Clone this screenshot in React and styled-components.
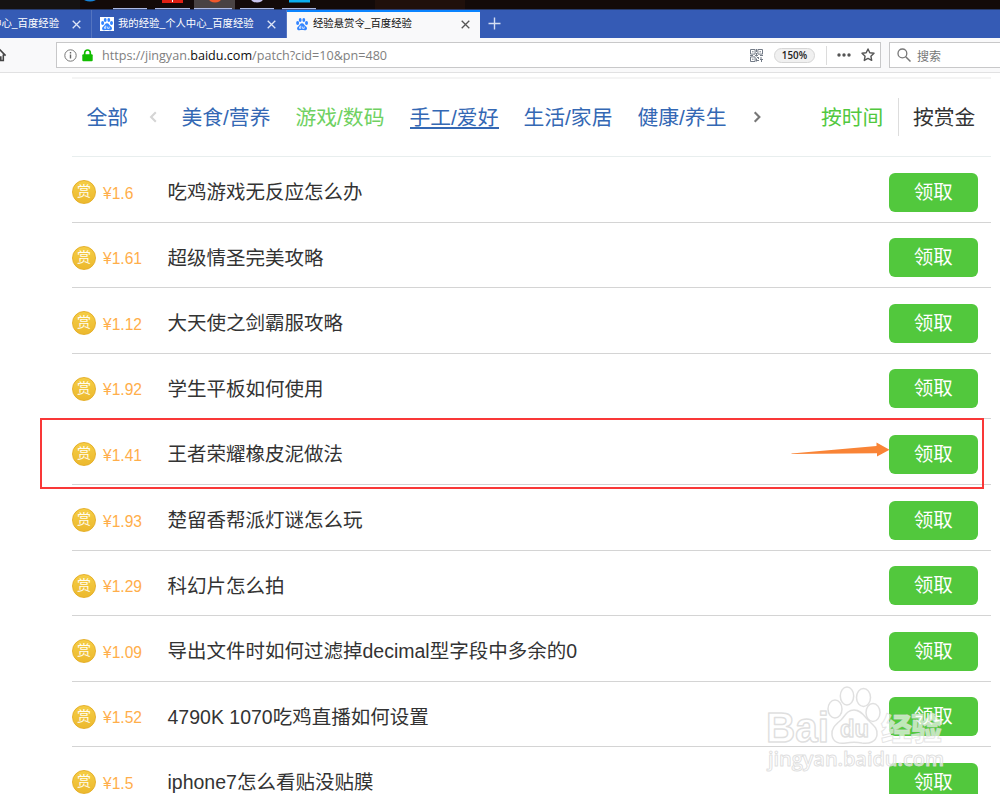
import React from "react";
import styled, { createGlobalStyle } from "styled-components";

const GlobalStyle = createGlobalStyle`
  * {
    box-sizing: border-box;
  }

  body {
    margin: 0;
    overflow: hidden;
    background: #fff;
    font-family: "Liberation Sans", "Noto Sans CJK SC", sans-serif;
  }
`;

const Window = styled.div`
  position: relative;
  width: 1000px;
  height: 794px;
  overflow: hidden;
  display: flex;
  flex-direction: column;
  background: #fff;
`;

const Desktop = styled.svg`
  display: block;
  flex: none;
  width: 1000px;
  height: 10px;
`;

const TabBar = styled.div`
  flex: none;
  display: flex;
  height: 28px;
  background: #355bb5;
`;

const Tab = styled.div`
  flex: none;
  display: flex;
  align-items: center;
  width: ${props => props.$width}px;
  padding: 0 10px 0 8px;
  overflow: hidden;
  color: ${props => (props.$active ? "#111" : "#fff")};
  background: ${props => (props.$active ? "#f9f9fa" : "transparent")};
  border-right: ${props => (props.$active ? "none" : "1px solid #5474c0")};
  box-shadow: ${props => (props.$active ? "inset 0 2px #0a84ff" : "none")};
`;

const TabTitle = styled.span`
  flex: 1;
  min-width: 0;
  display: flex;
  justify-content: ${props => (props.$end ? "flex-end" : "flex-start")};
  margin: 0 0 0 ${props => (props.$end ? 0 : 4)}px;
  font-size: 10.35px;
  line-height: 16px;
  white-space: nowrap;
`;

const CloseSlot = styled.span`
  display: flex;
  flex: none;
  margin-left: ${props => props.$gap || 0}px;
`;

const NewTab = styled.div`
  display: flex;
  align-items: center;
  padding: 0 0 2px 8px;
`;

const Toolbar = styled.div`
  flex: none;
  display: flex;
  align-items: center;
  height: 35px;
  background: #f9f9fa;
  border-bottom: 1px solid #e1e1e2;
`;

const HomeSlot = styled.div`
  flex: none;
  width: 56px;
  height: 16px;
  overflow: hidden;
`;

const AddressBar = styled.div`
  flex: none;
  display: flex;
  align-items: center;
  width: 825px;
  height: 26px;
  padding: 0 5px 0 7px;
  background: #fff;
  border: 1px solid #c8c8c9;
`;

const Url = styled.div`
  flex: 1;
  margin-left: 9px;
  padding-top: 2px;
  font-family: "Open Sans", "Noto Sans", sans-serif;
  font-size: 12.6px;
  line-height: 18px;
  color: #808080;
  white-space: nowrap;

  b {
    font-weight: normal;
    color: #0c0c0d;
  }
`;

const Zoom = styled.div`
  width: 41px;
  height: 15px;
  margin: 0 11px;
  border: 1px solid #d6d6d6;
  border-radius: 8px;
  background: #f0f0f0;
  font-family: "Open Sans", sans-serif;
  font-size: 9.8px;
  font-weight: 600;
  line-height: 14px;
  text-align: center;
  color: #222;
`;

const Separator = styled.div`
  width: 1px;
  height: 19px;
  margin-right: 9px;
  background: #dcdcdc;
`;

const SearchBar = styled.div`
  flex: none;
  display: flex;
  align-items: center;
  width: 130px;
  height: 26px;
  margin-left: 8px;
  padding-left: 7px;
  background: #fff;
  border: 1px solid #c8c8c9;
  font-size: 12px;
  color: #777;

  svg {
    margin-right: 6px;
  }
`;

const Page = styled.main`
  flex: none;
  width: 919px;
  margin: 4px 0 0 72px;
  border-top: 2px solid #f4f4f4;
`;

const Filters = styled.nav`
  display: flex;
  align-items: center;
  height: 78px;
  padding: 0 0 1px 14.5px;
  border-bottom: 1px solid #e8eeee;
  font-size: 20.8px;
  white-space: nowrap;
`;

const Filter = styled.a`
  flex: none;
  width: ${props => props.$width}px;
  height: 23px;
  color: ${props => (props.$current ? "#70d162" : "#3468b4")};
  line-height: 24px;
  border-bottom: 2px solid ${props => (props.$hovered ? "#3468b4" : "transparent")};
`;

const Categories = styled.div`
  display: flex;
  gap: 25px;
  margin: 0 26px 0 24.5px;
`;

const Sort = styled.div`
  display: flex;
  align-items: center;
  margin-left: 60px;
`;

const SortItem = styled.a`
  width: 78px;
  height: 38px;
  line-height: 40px;
  color: ${props => (props.$current ? "#51c83e" : "#333")};
  border-right: ${props => (props.$current ? "1px solid #ddd" : "none")};

  & + & {
    margin-left: 14px;
  }
`;

const Row = styled.div`
  display: flex;
  align-items: center;
  height: 65.6px;
  padding: 5.6px 13px 0 0;
  border-bottom: 1px solid #d4d4d4;
`;

const Coin = styled.div`
  flex: none;
  width: 24px;
  height: 24px;
  border: 1.5px solid #e6b02a;
  border-radius: 50%;
  background: linear-gradient(#f5cd45, #ecb92e);
  font-size: 14px;
  line-height: 21px;
  text-align: center;
  color: #fffdf2;
`;

const Price = styled.div`
  flex: none;
  width: 64.5px;
  margin-left: 7px;
  padding-top: 3px;
  font-size: 15.6px;
  color: #ffae4a;
`;

const Title = styled.div`
  flex: 1;
  font-size: 19.5px;
  line-height: 30px;
  color: #333;
  white-space: nowrap;
`;

const ClaimButton = styled.button`
  flex: none;
  width: 89.5px;
  height: 39px;
  padding: 0;
  border: none;
  border-radius: 6px;
  background: #52c83d;
  font: inherit;
  font-size: 19.5px;
  line-height: 37px;
  color: #fff;
`;

const Highlight = styled.div`
  position: absolute;
  left: 40px;
  top: 418px;
  width: 944px;
  height: 71px;
  border: 2px solid #f93838;
`;

const Pointer = styled.svg`
  position: absolute;
  left: 790px;
  top: 440px;
`;

const Watermark = styled.svg`
  position: absolute;
  left: 760px;
  top: 680px;
`;

const tasks = [
  { price: "1.6", title: "吃鸡游戏无反应怎么办" },
  { price: "1.61", title: "超级情圣完美攻略" },
  { price: "1.12", title: "大天使之剑霸服攻略" },
  { price: "1.92", title: "学生平板如何使用" },
  { price: "1.41", title: "王者荣耀橡皮泥做法" },
  { price: "1.93", title: "楚留香帮派灯谜怎么玩" },
  { price: "1.29", title: "科幻片怎么拍" },
  { price: "1.09", title: "导出文件时如何过滤掉decimal型字段中多余的0" },
  { price: "1.52", title: "4790K 1070吃鸡直播如何设置" },
  { price: "1.5", title: "iphone7怎么看贴没贴膜" },
];

const categories = ["美食/营养", "游戏/数码", "手工/爱好", "生活/家居", "健康/养生"];

const Paw = ({ boxed }) => (
  <svg width="14" height="14" viewBox="0 0 14 14">
    {boxed && <rect width="14" height="14" fill="#fff" />}
    <g fill="#3385ff">
      <ellipse cx="2.6" cy="6" rx="1.5" ry="1.9" />
      <ellipse cx="5.2" cy="3" rx="1.4" ry="2" />
      <ellipse cx="8.8" cy="3" rx="1.4" ry="2" />
      <ellipse cx="11.5" cy="6" rx="1.5" ry="1.9" />
      <path d="M7 6.2C5 6.2 4.7 8.3 3.2 9.4 1.1 11 2.2 13.4 4.4 13.2c1.8-.2 3.4-.2 5.2 0 2.3.2 3.4-2.2 1.3-3.8C9.3 8.3 9 6.2 7 6.2Z" />
    </g>
    <path d="M5.8 8.6v2.8H4.5V9.9h1.3M7.6 9.6v1.8h1.6V9.6" fill="none" stroke="#fff" strokeWidth="0.7" />
  </svg>
);

const Close = ({ color }) => (
  <svg width="9" height="9" viewBox="0 0 9 9">
    <path d="M.7.7l7.6 7.6M8.3.7L.7 8.3" stroke={color} strokeWidth="1.3" />
  </svg>
);

const Chevron = ({ left, color }) => (
  <svg width="10" height="14" viewBox="0 0 10 14">
    <path
      d={left ? "M8 1.5L2.5 7 8 12.5" : "M2 1.5L7.5 7 2 12.5"}
      fill="none"
      stroke={color}
      strokeWidth="2.5"
    />
  </svg>
);

const DesktopStrip = () => (
  <Desktop viewBox="0 0 1000 10">
    <rect width="1000" height="10" fill="#130a09" />
    <rect width="80" height="10" fill="#151312" />
    <rect x="375" width="90" height="10" fill="#20100b" />
    <rect x="194" width="41" height="10" fill="#494343" />
    <ellipse cx="90" cy="-2" rx="7" ry="3.5" fill="#1683d8" />
    <rect x="162" width="21" height="3" fill="#df2015" />
    <path d="M172.5 0v2" stroke="#fff" />
    <ellipse cx="215" cy="-1" rx="6" ry="3.5" fill="#f0582b" />
    <ellipse cx="257" cy="-1" rx="6" ry="3.5" fill="#c9c5ef" />
    <rect x="289" width="21" height="2.5" fill="#09aef0" />
    <g fill="#acb9e4">
      <rect x="113" y="8" width="34" height="1.5" />
      <rect x="155" y="8" width="35" height="1.5" />
      <rect x="194" y="8" width="38" height="1.5" />
      <rect x="240" y="8" width="34" height="1.5" />
      <rect x="282" y="8" width="34" height="1.5" />
    </g>
    <rect y="9.3" width="1000" height=".7" fill="#304f99" />
  </Desktop>
);

const BrowserTabs = () => (
  <TabBar>
    <Tab $width={92}>
      <TabTitle $end>中心_百度经验</TabTitle>
      <CloseSlot $gap={13}>
        <Close color="#dfe6f7" />
      </CloseSlot>
    </Tab>
    <Tab $width={195}>
      <Paw boxed />
      <TabTitle>我的经验_个人中心_百度经验</TabTitle>
      <CloseSlot $gap={4}>
        <Close color="#dfe6f7" />
      </CloseSlot>
    </Tab>
    <Tab $width={193} $active>
      <Paw />
      <TabTitle>经验悬赏令_百度经验</TabTitle>
      <CloseSlot>
        <Close color="#555" />
      </CloseSlot>
    </Tab>
    <NewTab>
      <svg width="13" height="13" viewBox="0 0 13 13">
        <path d="M6.5.5v12M.5 6.5h12" stroke="#d5def3" strokeWidth="1.4" />
      </svg>
    </NewTab>
  </TabBar>
);

const BrowserToolbar = () => (
  <Toolbar>
    <HomeSlot>
      <svg width="16" height="16" viewBox="0 0 16 16">
        <path d="M-7 8.6L-.5 2.4 5.6 8.6M3.3 7.5v6H.8V10h-2.6" fill="none" stroke="#444" strokeWidth="1.6" />
      </svg>
    </HomeSlot>
    <AddressBar>
      <svg width="13" height="13" viewBox="0 0 13 13">
        <circle cx="6.5" cy="6.5" r="5.7" fill="none" stroke="#777" />
        <path d="M6.5 5.6v4M6.5 3v1.4" stroke="#666" strokeWidth="1.4" />
      </svg>
      <svg width="11" height="13" viewBox="0 0 11 13" style={{ marginLeft: 5 }}>
        <path d="M2.7 6V3.8a2.8 2.8 0 015.6 0V6" fill="none" stroke="#12bc00" strokeWidth="1.7" />
        <rect x=".3" y="5.3" width="10.4" height="7" rx="1" fill="#12bc00" />
      </svg>
      <Url>
        https://jingyan.<b>baidu.com</b>/patch?cid=10&amp;pn=480
      </Url>
      <svg width="13" height="13" viewBox="0 0 13 13" fill="none" stroke="#737b87">
        <path d="M.5.5h4.6v4.6H.5zM7.9.5h4.6v4.6H7.9zM.5 7.9h4.6v4.6H.5z" />
        <path d="M2 2.8h1.6M9.4 2.8H11M2 10.2h1.6M6.5 0v3M6.5 4v3.5M0 6.5h3M5 6.5h3M10 6.5h3M7 8.5h2M8.5 8v2M11 8v2M7 11.5h2M10 10.5h3M11.5 10v3M6.5 9.5v3" />
      </svg>
      <Zoom>150%</Zoom>
      <Separator />
      <svg width="16" height="4" viewBox="0 0 16 4" fill="#555">
        <circle cx="3" cy="2" r="1.7" />
        <circle cx="8" cy="2" r="1.7" />
        <circle cx="13" cy="2" r="1.7" />
      </svg>
      <svg width="14" height="14" viewBox="0 0 14 14" style={{ marginLeft: 9 }}>
        <path
          d="M7 1l1.8 3.8 4.2.5-3.1 2.9.8 4.2L7 10.4l-3.7 2 .8-4.2L1 5.3l4.2-.5z"
          fill="none"
          stroke="#555"
          strokeWidth="1.4"
          strokeLinejoin="round"
        />
      </svg>
    </AddressBar>
    <SearchBar>
      <svg width="14" height="14" viewBox="0 0 14 14">
        <circle cx="5.4" cy="5.4" r="4.4" fill="none" stroke="#777" strokeWidth="1.3" />
        <path d="M8.7 8.7l4.8 4.8" stroke="#777" strokeWidth="1.5" />
      </svg>
      搜索
    </SearchBar>
  </Toolbar>
);

const TaskRow = ({ task }) => (
  <Row>
    <Coin>赏</Coin>
    <Price>¥{task.price}</Price>
    <Title>{task.title}</Title>
    <ClaimButton>领取</ClaimButton>
  </Row>
);

const BaiduWatermark = () => (
  <Watermark width="190" height="100" viewBox="0 0 190 100">
    <g
      fill="#fff"
      fillOpacity="0.65"
      stroke="#dadada"
      strokeOpacity="0.85"
      strokeWidth="1.5"
      strokeLinejoin="round"
      fontFamily='"Liberation Sans", "Noto Sans CJK SC", sans-serif'
    >
      <text x="6" y="62" fontSize="42" fontWeight="700" textLength="63" lengthAdjust="spacingAndGlyphs">
        Bai
      </text>
      <ellipse cx="75" cy="29" rx="7" ry="9" />
      <ellipse cx="87" cy="16" rx="6.7" ry="9" />
      <ellipse cx="103.5" cy="17.5" rx="7" ry="9" />
      <ellipse cx="113" cy="32.5" rx="7" ry="9" />
      <path d="M94 30c-7 0-9 6-13 10-6 5-10 9-9 15 1 8 8 9 14 8 6-1 10-1 16 0 7 1 14-1 15-8 1-7-4-10-9-15-4-4-7-10-14-10Z" />
      <text x="80" y="57" fontSize="24" fontWeight="700" textLength="29" lengthAdjust="spacingAndGlyphs">
        du
      </text>
      <text x="121" y="60" fontSize="31" fontWeight="900" strokeWidth="1" strokeOpacity="0.7" textLength="61">
        经验
      </text>
      <text x="8" y="86" fontSize="20" fontWeight="600" strokeWidth="1" textLength="176" fontFamily='"Open Sans", sans-serif'>
        jingyan.baidu.com
      </text>
    </g>
  </Watermark>
);

const App = () => (
  <>
    <GlobalStyle />
    <Window>
      <DesktopStrip />
      <BrowserTabs />
      <BrowserToolbar />
      <Page>
        <Filters>
          <Filter $width={62}>全部</Filter>
          <Chevron left color="#d5d5d5" />
          <Categories>
            {categories.map((name, index) => (
              <Filter key={name} $width={89} $current={index === 1} $hovered={index === 2}>
                {name}
              </Filter>
            ))}
          </Categories>
          <Chevron color="#777" />
          <Sort>
            <SortItem $current>按时间</SortItem>
            <SortItem>按赏金</SortItem>
          </Sort>
        </Filters>
        {tasks.map(task => (
          <TaskRow key={task.price} task={task} />
        ))}
      </Page>
      <Highlight />
      <Pointer width="102" height="22" viewBox="0 0 102 22">
        <path d="M1.5 13.5L86.5 6V2.5L99.5 9.700 87 16.5v-3.200L1.5 14Z" fill="#f98436" />
      </Pointer>
      <BaiduWatermark />
    </Window>
  </>
);

export default App;
